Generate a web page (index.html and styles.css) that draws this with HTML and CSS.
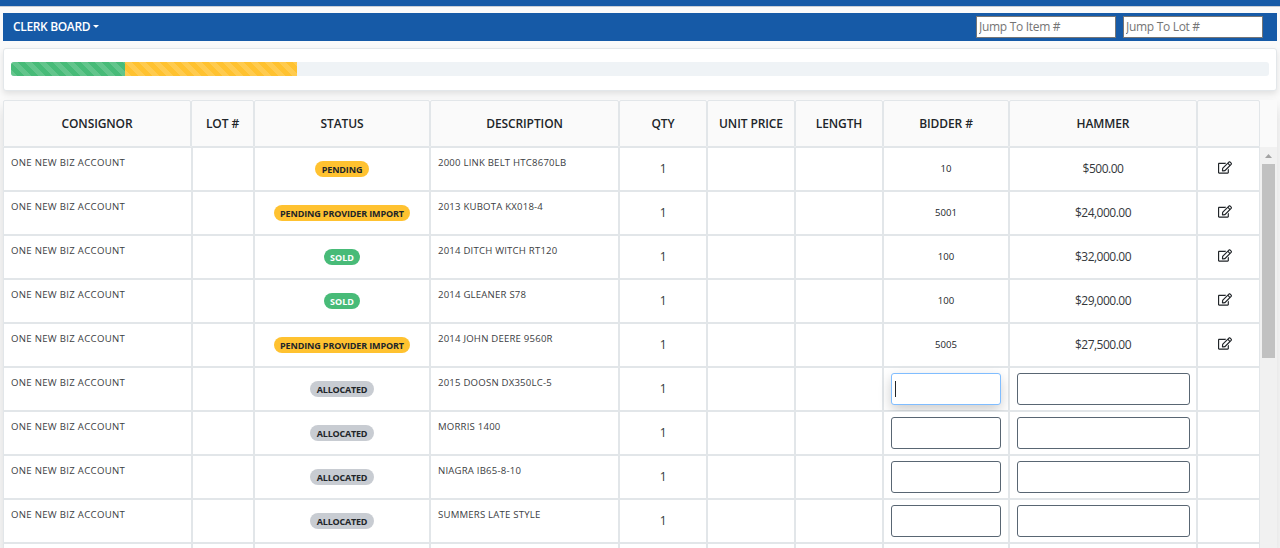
FILE: index.html
```html
<!DOCTYPE html>
<html lang="en">
<head>
<meta charset="utf-8">
<title>Clerk Board</title>
<link rel="stylesheet" href="styles.css">
</head>
<body>
<svg class="sprite" aria-hidden="true">
  <symbol id="edit" viewBox="0 0 576 512"><path d="M402.300 344.900l32-32c5-5 13.700-1.500 13.700 5.700V464c0 26.500-21.500 48-48 48H48c-26.500 0-48-21.500-48-48V112c0-26.500 21.500-48 48-48h273.500c7.100 0 10.700 8.600 5.700 13.700l-32 32c-1.500 1.500-3.500 2.300-5.700 2.300H48v352h352V350.500c0-2.100.8-4.100 2.300-5.600zm156.600-201.800L296.300 405.700l-90.400 10c-26.200 2.900-48.500-19.200-45.600-45.600l10-90.400L432.900 17.100c22.900-22.900 59.900-22.900 82.700 0l43.200 43.200c22.900 22.900 22.900 60 .1 82.800zM460.100 174L402 115.900 216.200 301.800l-7.300 65.300 65.300-7.300L460.100 174zm64.800-79.700l-43.200-43.200c-4.100-4.100-10.800-4.100-14.800 0L436 82l58.100 58.100 30.900-30.900c4-4.200 4-10.800-.1-14.900z"/></symbol>
</svg>
<div class="topbar"></div>
<main class="page">
  <nav class="navbar">
    <div class="menu">CLERK BOARD<span class="caret"></span></div>
    <input class="jump" placeholder="Jump To Item #">
    <input class="jump" placeholder="Jump To Lot #">
  </nav>
  <section class="card">
    <div class="progress"><div class="bar sold-bar"></div><div class="bar pending-bar"></div></div>
  </section>
  <section class="board">
    <div class="head row">
      <div>CONSIGNOR</div><div>LOT #</div><div>STATUS</div><div>DESCRIPTION</div><div>QTY</div><div>UNIT PRICE</div><div>LENGTH</div><div>BIDDER #</div><div>HAMMER</div><div></div>
    </div>
    <div class="scroller">
      <div class="rows">
        <div class="row"><div class="txt">ONE NEW BIZ ACCOUNT</div><div></div><div><span class="badge yellow">PENDING</span></div><div class="txt">2000 LINK BELT HTC8670LB</div><div class="num">1</div><div></div><div></div><div class="small">10</div><div class="num">$500.00</div><div><svg class="icon"><use href="#edit"/></svg></div></div>
        <div class="row"><div class="txt">ONE NEW BIZ ACCOUNT</div><div></div><div><span class="badge yellow">PENDING PROVIDER IMPORT</span></div><div class="txt">2013 KUBOTA KX018-4</div><div class="num">1</div><div></div><div></div><div class="small">5001</div><div class="num">$24,000.00</div><div><svg class="icon"><use href="#edit"/></svg></div></div>
        <div class="row"><div class="txt">ONE NEW BIZ ACCOUNT</div><div></div><div><span class="badge green">SOLD</span></div><div class="txt">2014 DITCH WITCH RT120</div><div class="num">1</div><div></div><div></div><div class="small">100</div><div class="num">$32,000.00</div><div><svg class="icon"><use href="#edit"/></svg></div></div>
        <div class="row"><div class="txt">ONE NEW BIZ ACCOUNT</div><div></div><div><span class="badge green">SOLD</span></div><div class="txt">2014 GLEANER S78</div><div class="num">1</div><div></div><div></div><div class="small">100</div><div class="num">$29,000.00</div><div><svg class="icon"><use href="#edit"/></svg></div></div>
        <div class="row"><div class="txt">ONE NEW BIZ ACCOUNT</div><div></div><div><span class="badge yellow">PENDING PROVIDER IMPORT</span></div><div class="txt">2014 JOHN DEERE 9560R</div><div class="num">1</div><div></div><div></div><div class="small">5005</div><div class="num">$27,500.00</div><div><svg class="icon"><use href="#edit"/></svg></div></div>
        <div class="row"><div class="txt">ONE NEW BIZ ACCOUNT</div><div></div><div><span class="badge gray">ALLOCATED</span></div><div class="txt">2015 DOOSN DX350LC-5</div><div class="num">1</div><div></div><div></div><div class="entry"><div class="field active"><span class="cursor"></span></div></div><div class="entry amount"><input class="field"></div><div></div></div>
        <div class="row"><div class="txt">ONE NEW BIZ ACCOUNT</div><div></div><div><span class="badge gray">ALLOCATED</span></div><div class="txt">MORRIS 1400</div><div class="num">1</div><div></div><div></div><div class="entry"><input class="field"></div><div class="entry amount"><input class="field"></div><div></div></div>
        <div class="row"><div class="txt">ONE NEW BIZ ACCOUNT</div><div></div><div><span class="badge gray">ALLOCATED</span></div><div class="txt">NIAGRA IB65-8-10</div><div class="num">1</div><div></div><div></div><div class="entry"><input class="field"></div><div class="entry amount"><input class="field"></div><div></div></div>
        <div class="row"><div class="txt">ONE NEW BIZ ACCOUNT</div><div></div><div><span class="badge gray">ALLOCATED</span></div><div class="txt">SUMMERS LATE STYLE</div><div class="num">1</div><div></div><div></div><div class="entry"><input class="field"></div><div class="entry amount"><input class="field"></div><div></div></div>
        <div class="row last"><div></div><div></div><div></div><div></div><div></div><div></div><div></div><div></div><div></div><div></div></div>
      </div>
      <div class="scrollbar"><div class="arrow"></div><div class="thumb"></div></div>
    </div>
  </section>
</main>
</body>
</html>
```
FILE: styles.css
```css
* { box-sizing: border-box; }
body { margin: 0; height: 548px; overflow: hidden; background: #fafafa; color: #212529; font-family: "Open Sans", "Noto Sans", sans-serif; font-size: 12px; }
.sprite { display: none; }
.topbar { height: 7px; background: #165aa7; border-bottom: 1px solid #c9ced6; }
.page { padding: 6px 3px 0; }
.navbar { display: flex; align-items: center; height: 28px; padding: 0 14px 0 10px; gap: 7px; background: #165aa7; }
.menu { display: flex; align-items: center; gap: 3px; margin-right: auto; padding-bottom: 1px; color: #fff; font-weight: 600; font-size: 12px; letter-spacing: -0.35px; }
.caret { border: 3px solid transparent; border-top-color: #fff; border-bottom: 0; }
.jump { width: 140px; height: 22px; padding: 0 2px 2px; border: 1px solid #767676; border-radius: 0; background: #fff; font: 12px "Open Sans", sans-serif; letter-spacing: -0.3px; }
.jump::placeholder { color: #757575; }
.card { height: 43px; margin-top: 7px; padding: 13px 7px; background: #fff; border: 1px solid #e3e7ea; border-radius: 3px; box-shadow: 0 3px 6px rgba(0,0,0,.1); }
.progress { display: flex; height: 14px; overflow: hidden; border-radius: 3px; background: #eff3f6; }
.bar { background-image: linear-gradient(45deg, rgba(255,255,255,.15) 25%, transparent 25%, transparent 50%, rgba(255,255,255,.15) 50%, rgba(255,255,255,.15) 75%, transparent 75%); background-size: 14px 14px; }
.sold-bar { width: 114px; background-color: #48bb78; }
.pending-bar { width: 172px; background-color: #ffc230; }
.board { margin-top: 9px; height: 448px; background: #fafafa; box-shadow: 0 8px 12px rgba(0,0,0,.13); }
.row { display: grid; grid-template-columns: 189px 62px 176px 189px 88px 88px 88px 126px 188px 63px; width: 1257px; height: 44px; }
.row > div { display: flex; align-items: center; justify-content: center; min-width: 0; border: 1px solid #e2e6e9; background: #fff; white-space: nowrap; }
.head.row { grid-template-columns: 188px 63px 176px 189px 88px 88px 88px 126px 188px 63px; height: 47px; }
.head.row > div { background: #fafafa; font-weight: 600; letter-spacing: -0.1px; border-radius: 2px 2px 0 0; }
.scroller { display: flex; height: 401px; overflow: hidden; }
.row.last { height: 5px; }
.row.last > div { border-bottom: 0; }
.row > .txt { justify-content: flex-start; align-items: flex-start; padding: 7px 0 0 7px; font-size: 9.600px; line-height: 15px; letter-spacing: 0.3px; color: #3c4043; }
.row > .txt:nth-child(4) { letter-spacing: 0.2px; }
.row > .num { padding-bottom: 2px; letter-spacing: -0.5px; color: #34383c; }
.row > .small { padding-bottom: 1px; font-size: 9.600px; }
.badge { height: 16px; padding: 0 6.500px; border-radius: 8px; font-size: 9px; line-height: 17px; font-weight: 700; letter-spacing: -0.13px; }
.yellow { background: #ffc230; }
.green { background: #48bb78; color: #fff; letter-spacing: 0; }
.gray { background: #c8ccd2; letter-spacing: -0.22px; }
.icon { width: 14px; height: 13px; fill: #212529; margin: 0 7px 3px 0; }
.row > .entry { padding: 0 7px; }
.row > .amount { padding-right: 6px; }
.field { width: 100%; height: 32px; padding: 0 3px; border: 1px solid #596673; border-radius: 3px; background: #fff; outline: 0; }
.active { display: flex; align-items: center; border-color: #80bdff; box-shadow: 0 5px 13px rgba(0,0,0,.2); }
.cursor { width: 1px; height: 16px; background: #212529; }
.scrollbar { width: 17px; height: 401px; padding: 0 2px; background: #f1f1f1; }
.arrow { width: 7px; height: 4px; margin: 7px 3px 6px; background: #a3a3a3; clip-path: polygon(50% 0, 100% 100%, 0 100%); }
.thumb { height: 194px; background: #c1c1c1; }
```
